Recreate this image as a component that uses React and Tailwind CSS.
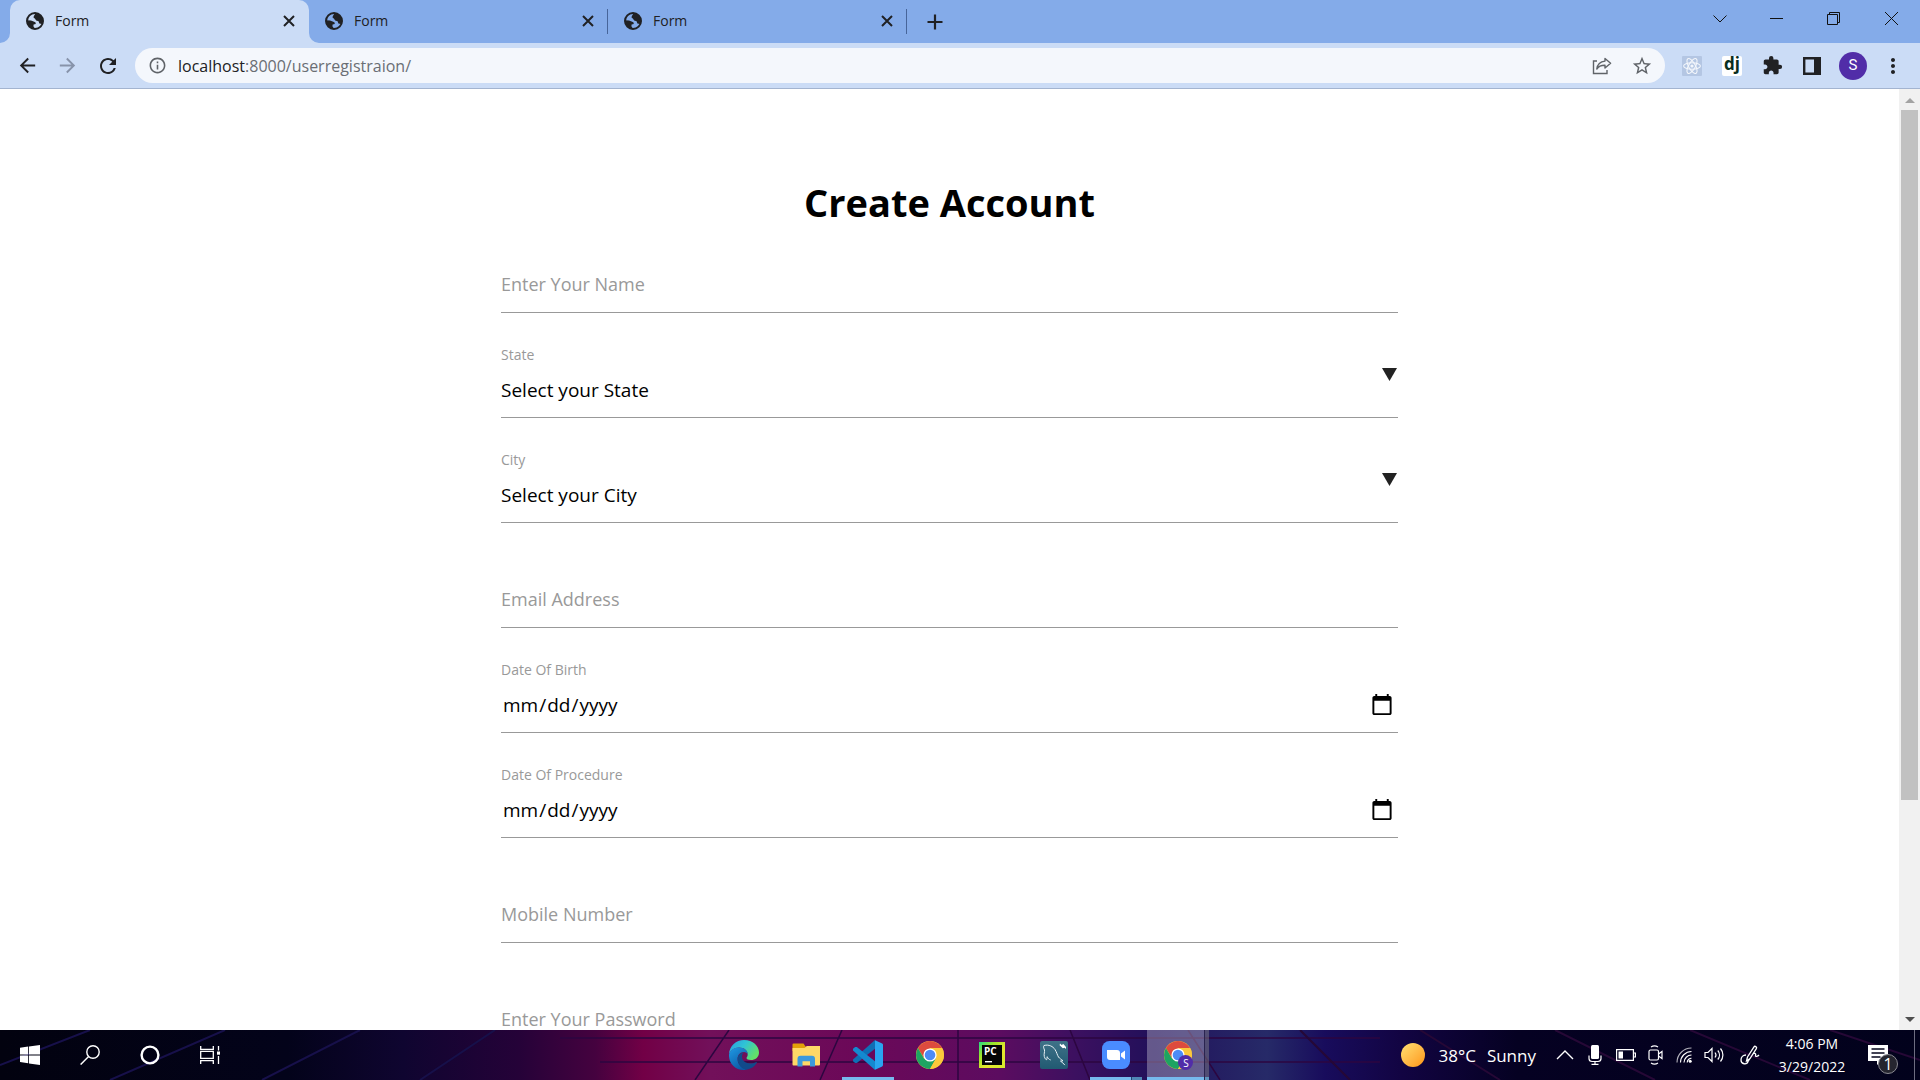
import React from "react";
import {
  MdArrowBack,
  MdArrowForward,
  MdRefresh,
  MdInfoOutline,
  MdStarBorder,
  MdExtension,
  MdMoreVert,
} from "react-icons/md";

/* ---------- browser icons ---------- */

function Globe() {
  return (
    <svg viewBox="0 0 18 18" className="size-[18px] shrink-0" fill="none">
      <circle cx="9" cy="9" r="8" stroke="#202124" strokeWidth="2" />
      <path
        d="M9.5 1.2 8.2 3.4 7.4 5.2 9 6.8 10.2 8.6 12.6 9.2 13.4 11.6 16 12 17 9 15.6 4.4 12 1.6z"
        fill="#202124"
      />
      <path
        d="M1 8.2 5 8.4 7.6 9.4 9.4 10.2 9.8 12 7.6 12.6 7.4 14.2 9 16.8 5 16 2 13z"
        fill="#202124"
      />
    </svg>
  );
}

function CloseIcon() {
  return (
    <svg viewBox="0 0 12 12" className="size-3" stroke="currentColor" strokeWidth="2">
      <path d="m1 1 10 10M11 1 1 11" />
    </svg>
  );
}

function PlusIcon() {
  return (
    <svg viewBox="0 0 16 16" className="size-4" stroke="currentColor" strokeWidth="2.2">
      <path d="M8 .5v15M.5 8h15" />
    </svg>
  );
}

function ShareIcon() {
  return (
    <svg viewBox="0 0 20 20" className="size-5" fill="none" stroke="#5f6368" strokeWidth="1.4">
      <path d="M5 5H1.5v12.5H15V14" />
      <path d="M13 2.5 18.6 7.3 13 12V9.3C9 9.2 6.4 10.6 4.8 13 5.3 9 8 5.6 13 5.1z" strokeLinejoin="round" />
    </svg>
  );
}

function ReactExt() {
  return (
    <svg viewBox="0 0 20 20" className="size-5" fill="none">
      <rect width="20" height="20" rx="1" fill="#b4c6e3" />
      <g stroke="#f4f7fc" strokeWidth="1.1">
        <ellipse cx="10" cy="10" rx="8.4" ry="3.3" />
        <ellipse cx="10" cy="10" rx="8.4" ry="3.3" transform="rotate(60 10 10)" />
        <ellipse cx="10" cy="10" rx="8.4" ry="3.3" transform="rotate(120 10 10)" />
      </g>
      <circle cx="10" cy="10" r="1.6" fill="#f4f7fc" />
    </svg>
  );
}

function SidePanel() {
  return (
    <svg viewBox="0 0 18 18" className="size-[18px]">
      <path fill="#202124" fillRule="evenodd" d="M0 0h18v18H0zM2.4 2.4v13.2H11V2.4z" />
    </svg>
  );
}

/* ---------- taskbar icons ---------- */

function WindowsIcon() {
  return (
    <svg viewBox="0 0 20 20" className="size-5" fill="#fff">
      <path d="M0 2.8 8.2 1.6V9.5H0zM9 1.5 20 0v9.5H9zM0 10.4h8.2v7.9L0 17.1zM9 10.4h11V20L9 18.4z" />
    </svg>
  );
}

function SearchIcon() {
  return (
    <svg viewBox="0 0 20 20" className="size-5" fill="none" stroke="#fff" strokeWidth="1.4">
      <circle cx="13" cy="7" r="6.2" />
      <path d="M8.6 11.6.6 19.6" />
    </svg>
  );
}

function CortanaIcon() {
  return (
    <svg viewBox="0 0 20 20" className="size-5" fill="none" stroke="#fff" strokeWidth="2.4">
      <circle cx="10" cy="10" r="8.4" />
    </svg>
  );
}

function TaskViewIcon() {
  return (
    <svg viewBox="0 0 20 20" className="size-5" fill="none" stroke="#fff" strokeWidth="1.3">
      <path d="M.7 1v3.3h12.6V1M.7 19v-3.3h12.6V19M.7 6.4h12.6v7H.7zM18.5 1v4.5M18.5 11v8" />
      <path d="M17 6.5h3v3.2h-3z" fill="#fff" stroke="none" />
    </svg>
  );
}

function EdgeIcon() {
  return (
    <svg viewBox="0 0 30 30" className="size-[30px]">
      <defs>
        <linearGradient id="edgeTop" x1="0" y1="0" x2="1" y2="0.5">
          <stop offset="0" stopColor="#2b9be0" />
          <stop offset=".5" stopColor="#2fc3d6" />
          <stop offset="1" stopColor="#62e069" />
        </linearGradient>
        <linearGradient id="edgeLow" x1="0" y1="0" x2="0.6" y2="1">
          <stop offset="0" stopColor="#1f9ae4" />
          <stop offset="1" stopColor="#0c59a4" />
        </linearGradient>
      </defs>
      <path
        d="M0 14.5C.5 5.500 7 0 15 0c9 0 15 6 15 12.500 0 5-4 7.500-8 7.500-3 0-4.500-1-4.500-2 0-.8 1.200-1.300 1.200-3.600C18.700 10.500 15 7.600 10 7.600 5 7.600 1.500 10.500 0 14.500z"
        fill="url(#edgeTop)"
      />
      <path
        d="M0 14.500C1.500 10 5 7.600 10 7.600c5 0 8.700 2.900 8.700 6.800-.5-1.400-2-2.300-3.700-2.300-4 0-6.400 3.200-6.400 7 0 5.400 4.400 8.900 8.800 10.600C7.500 31.500-.5 24 0 14.500z"
        fill="url(#edgeLow)"
      />
      <path
        d="M15 12.100c-5 1.700-6.400 4-6.400 7.200 0 5 4 9.900 8.800 10.400 4.600-.5 8.200-3.200 10.300-6.600.5-.9-.3-1.200-.9-.9-5.500 2.800-13.800.6-13.800-5.500 0-2 .8-3.700 2-4.600z"
        fill="#114a8b"
      />
    </svg>
  );
}

function FolderIcon() {
  return (
    <svg viewBox="0 0 28 24" className="h-6 w-7">
      <path d="M.5 1.500a1 1 0 0 1 1-1h10l2 3H28V8H.500z" fill="#e3a008" />
      <path d="M.5 5h12l2.500-2h13v18.500a1 1 0 0 1-1 1H1.500a1 1 0 0 1-1-1z" fill="#ffd867" />
      <path d="M5.500 23.500v-7.700a3 3 0 0 1 3-3h11.500a3 3 0 0 1 3 3v7.700h-5v-5.200h-7.500v5.200z" fill="#3b99dc" />
    </svg>
  );
}

function VsCodeIcon() {
  return (
    <svg viewBox="0 0 30 30" className="size-[30px]">
      <path d="M22 0 0 19.500v1.700L2.200 23l1.600-.1L22.300 8.500z" fill="#0f6fb5" />
      <path d="M22 30 0 10.500V8.800L2.200 7l1.600.1L22.300 21.500z" fill="#1489d0" />
      <path d="M22 .3 29.200 3.600c.5.300.8.800.8 1.400v20c0 .6-.3 1.100-.8 1.400L22 29.700z" fill="#2aa5f0" />
    </svg>
  );
}

function ChromeIcon() {
  return (
    <svg viewBox="0 0 28 28" className="size-7">
      <circle cx="14" cy="14" r="14" fill="#fbc93b" />
      <path d="M14 7h12.100A14 14 0 0 0 1.900 7L8 17z" fill="#dd4b3e" />
      <path d="M1.900 7A14 14 0 0 0 14 28l6-10.500-6-3.500-6 3.500z" fill="#1da462" />
      <path d="M14 7h12.100A14 14 0 0 1 14 28l6-10.500z" fill="#fbc93b" />
      <circle cx="14" cy="14" r="6.600" fill="#fff" />
      <circle cx="14" cy="14" r="5.300" fill="#4c8bf5" />
    </svg>
  );
}

function PyCharmIcon() {
  return (
    <svg viewBox="0 0 26 26" className="size-[26px]">
      <defs>
        <linearGradient id="pyc" x1="0" y1="0" x2="1" y2="1">
          <stop offset="0" stopColor="#21d789" />
          <stop offset=".3" stopColor="#9be52a" />
          <stop offset=".6" stopColor="#e6e62e" />
          <stop offset="1" stopColor="#d3ea2b" />
        </linearGradient>
      </defs>
      <path d="M0 0h26v26H0z" fill="url(#pyc)" />
      <path d="M3 3h20v20H3z" fill="#050505" />
      <path d="M6 19h7v1.400H6z" fill="#fff" />
      <text x="5" y="13" fontFamily="Open Sans, sans-serif" fontWeight="700" fontSize="10" fill="#fff">
        PC
      </text>
    </svg>
  );
}

function WorkbenchIcon() {
  return (
    <svg viewBox="0 0 28 28" className="size-7" fill="none">
      <defs>
        <linearGradient id="wb" x1="0" y1="0" x2="0" y2="1">
          <stop offset="0" stopColor="#3f7288" />
          <stop offset="1" stopColor="#215a72" />
        </linearGradient>
      </defs>
      <rect width="28" height="28" rx="2" fill="url(#wb)" />
      <path
        d="M4 4.500c-1 1.500 0 3 .5 4.500.3 2-.8 4-.2 6.500.6 2 1.600 3.500 2.300 3.200.7-.3.200-2 .6-3 .6 1.500 1.800 2.800 3.500 3.300M4 4.500c5-1.300 9 1 11 4 1.800 2.800 2.200 5.500 3.500 7.500 1 1.500 3 2.400 4.500 3.800l-2.500.3c1.500 1.200 3.200 2.200 4.300 4"
        stroke="#e8f1f5"
        strokeWidth="1"
      />
      <path d="m20 2.500 1.600 1.600 1.800-1.200 2.600 3.200v2l-1.400-1.300-1.800.5-3.200-3z" fill="#fff" />
    </svg>
  );
}

function ZoomIcon() {
  return (
    <svg viewBox="0 0 28 28" className="size-7">
      <rect width="28" height="28" rx="7.500" fill="#4a8cff" />
      <path d="M5 9h10a3 3 0 0 1 3 3v7H8a3 3 0 0 1-3-3zM19 12.500 23 9.500v9l-4-3z" fill="#fff" />
    </svg>
  );
}

/* ---------- tray icons ---------- */

function TrayChevron() {
  return (
    <svg viewBox="0 0 18 10" className="h-[10px] w-[18px]" fill="none" stroke="#fff" strokeWidth="1.400">
      <path d="m1 9 8-8 8 8" />
    </svg>
  );
}

function MicIcon() {
  return (
    <svg viewBox="0 0 14 20" className="h-5 w-[14px]" fill="none" stroke="#fff" strokeWidth="1.200">
      <rect x="3" y="0" width="8" height="14" rx="1.500" fill="#fff" stroke="none" />
      <path d="M1 10.500v3a3 3 0 0 0 3 3h6a3 3 0 0 0 3-3v-3M7 16.500v3M3.500 19.400h7" />
    </svg>
  );
}

function BatteryIcon() {
  return (
    <svg viewBox="0 0 20 12" className="h-3 w-5" fill="none" stroke="#fff" strokeWidth="1.200">
      <path d="M.6.6h16.800v10.800H.6zM17.500 4h1.900v4h-1.900" />
      <path d="M2.500 2.500h4.500v7H2.500z" fill="#fff" stroke="none" />
    </svg>
  );
}

function MeetIcon() {
  return (
    <svg viewBox="0 0 16 20" className="h-5 w-4" fill="none" stroke="#fff" strokeWidth="1.200">
      <rect x="1" y="5" width="9.500" height="10" rx="1.500" />
      <path d="m10.500 9 3.500-2.500v7L10.500 11M3 2c2-1.300 5-1.300 7 0M3 18c2 1.300 5 1.300 7 0" />
    </svg>
  );
}

function WifiIcon() {
  return (
    <svg viewBox="0 0 16 16" className="size-4" fill="none" stroke="#fff" strokeWidth="1.100">
      <path d="M1 15.500C1 7.500 7.500 1 15.500 1" opacity=".7" />
      <path d="M4.500 15.500c0-6 5-11 11-11M8 15.500c0-4 3.500-7.500 7.500-7.500M11.200 15.500c0-2.300 2-4.300 4.300-4.300" />
      <circle cx="14.200" cy="14.200" r="1.500" fill="#fff" stroke="none" />
    </svg>
  );
}

function VolumeIcon() {
  return (
    <svg viewBox="0 0 20 16" className="h-4 w-5" fill="none" stroke="#fff" strokeWidth="1.200">
      <path d="M1 5.500h3L8 1.500v13l-4-4H1zM11 5.500c1.200 1.500 1.200 3.500 0 5M13.800 3.500c2.200 2.600 2.200 6.400 0 9M16.500 1.500c3.200 3.800 3.200 9.200 0 13" />
    </svg>
  );
}

function PenIcon() {
  return (
    <svg viewBox="0 0 20 20" className="size-5" fill="none" stroke="#fff" strokeWidth="1.300">
      <path d="M6.500 16 7.500 12 14 1.800c.8-1.200 3.200.2 2.500 1.500L10 13.500zM6 10c-3 0-5 2-5 5 0 4.500 6 5 7 1.500l5-7.500c1-1.500 3.500-.5 2.500 1.500-.5 1.500 2.500.8 3.500-.5" />
    </svg>
  );
}

function NotificationIcon() {
  return (
    <svg viewBox="0 0 20 20" className="size-5">
      <path d="M0 0h20v16h-6.500L9 20v-4H0z" fill="#fff" />
      <path d="M3.500 4h13M3.500 8h13M3.500 12h9" stroke="#05051c" strokeWidth="1.300" />
    </svg>
  );
}

/* ---------- browser window ---------- */

function Tab({ active, separator }) {
  return (
    <div
      className={
        active
          ? "relative flex w-[299px] min-w-0 items-center rounded-t-[10px] bg-[#cbdcf6] pr-[14px] pb-[2px] pl-4"
          : "relative flex w-[299px] min-w-0 items-center pr-[14px] pb-[2px] pl-4"
      }
    >
      <Globe />
      <span className="ml-[11px] flex-1 truncate text-sm text-[#202124]">Form</span>
      <button type="button" aria-label="Close tab" className="text-[#202124]">
        <CloseIcon />
      </button>
      {separator && <span className="absolute top-[9px] right-0 h-[25px] w-px bg-[#47659a]" />}
      {active && (
        <>
          <svg viewBox="0 0 10 10" className="absolute bottom-0 -left-[10px] size-[10px]">
            <path d="M10 0v10H0A10 10 0 0 0 10 0z" fill="#cbdcf6" />
          </svg>
          <svg viewBox="0 0 10 10" className="absolute -right-[10px] bottom-0 size-[10px]">
            <path d="M0 0v10h10A10 10 0 0 1 0 0z" fill="#cbdcf6" />
          </svg>
        </>
      )}
    </div>
  );
}

function TabStrip() {
  return (
    <div className="flex h-[43px] bg-[#84abe9] pl-[10px]">
      <Tab active />
      <Tab separator />
      <Tab separator />
      <button type="button" aria-label="New tab" className="ml-5 flex items-center text-[#202124]">
        <PlusIcon />
      </button>
      <div className="ml-auto flex h-[37px] items-center text-[#111]">
        <button type="button" aria-label="Search tabs" className="flex w-[57px] justify-center">
          <svg viewBox="0 0 14 8" className="h-2 w-[14px]" fill="none" stroke="currentColor">
            <path d="m.5.5 6.500 6.500 6.500-6.500" />
          </svg>
        </button>
        <button type="button" aria-label="Minimize" className="flex w-[57px] justify-center">
          <svg viewBox="0 0 13 13" className="size-[13px]" stroke="currentColor">
            <path d="M0 6.500h13" />
          </svg>
        </button>
        <button type="button" aria-label="Restore" className="flex w-[57px] justify-center">
          <svg viewBox="0 0 13 13" className="size-[13px]" fill="none" stroke="currentColor">
            <path d="M.5 2.500h10v10H.5zM2.500 2.500v-2h10v10h-2" />
          </svg>
        </button>
        <button type="button" aria-label="Close window" className="flex w-[58px] justify-center">
          <svg viewBox="0 0 13 13" className="size-[13px]" stroke="currentColor">
            <path d="m0 0 13 13M13 0 0 13" />
          </svg>
        </button>
      </div>
    </div>
  );
}

function ExtensionButton({ label, children }) {
  return (
    <button type="button" aria-label={label} className="flex w-10 justify-center">
      {children}
    </button>
  );
}

function Toolbar() {
  return (
    <div className="flex h-[46px] items-center border-b border-[#a3b4d0] bg-[#cbdcf6] text-[#202124]">
      <div className="flex w-[135px] items-center gap-[17px] pl-4">
        <button type="button" aria-label="Back">
          <MdArrowBack size={23} />
        </button>
        <button type="button" aria-label="Forward" className="text-[#8793aa]">
          <MdArrowForward size={23} />
        </button>
        <button type="button" aria-label="Reload">
          <MdRefresh size={24} />
        </button>
      </div>
      <div className="flex h-[35px] flex-1 items-center rounded-full bg-[#f4f7fc] pr-3 pl-[13px]">
        <MdInfoOutline size={19} className="text-[#5f6368]" />
        <div className="ml-[11px] flex-1 text-base">
          localhost<span className="text-[#6a6e74]">:8000/userregistraion/</span>
        </div>
        <button type="button" aria-label="Share" className="mr-[19px]">
          <ShareIcon />
        </button>
        <button type="button" aria-label="Bookmark this page" className="text-[#5f6368]">
          <MdStarBorder size={22} />
        </button>
      </div>
      <div className="flex items-center pl-[7px]">
        <ExtensionButton label="React Developer Tools">
          <ReactExt />
        </ExtensionButton>
        <ExtensionButton label="Django extension">
          <span className="flex size-5 items-center justify-center rounded-xs bg-white pb-1 text-[17px] leading-4 font-bold text-[#092e20]">
            dj
          </span>
        </ExtensionButton>
        <ExtensionButton label="Extensions">
          <MdExtension size={21} />
        </ExtensionButton>
        <ExtensionButton label="Side panel">
          <SidePanel />
        </ExtensionButton>
        <button
          type="button"
          aria-label="Profile"
          className="ml-[7px] flex size-7 items-center justify-center rounded-full bg-[#512da8] font-[Roboto] text-[15px] text-white"
        >
          S
        </button>
        <button type="button" aria-label="Menu" className="flex w-[53px] justify-center pr-[2px]">
          <MdMoreVert size={24} />
        </button>
      </div>
    </div>
  );
}

/* ---------- registration form ---------- */

function TextField({ id, label, type = "text" }) {
  return (
    <div className="h-[105px] shrink-0 border-b border-[#999] pt-[50px]">
      <input
        id={id}
        type={type}
        aria-label={label}
        placeholder={label}
        className="h-[52px] w-full bg-transparent text-lg outline-none placeholder:text-[#999]"
      />
    </div>
  );
}

function SelectField({ id, label, option }) {
  return (
    <div className="relative h-[105px] shrink-0 border-b border-[#999] pt-8">
      <label htmlFor={id} className="block text-sm text-[#999]">
        {label}
      </label>
      <select id={id} className="h-[50px] w-full appearance-none bg-transparent text-[19px] text-black outline-none">
        <option>{option}</option>
      </select>
      <svg viewBox="0 0 15 13" className="pointer-events-none absolute top-[55px] right-px h-[13px] w-[15px]">
        <path d="M0 0h15L7.500 13z" fill="#222" />
      </svg>
    </div>
  );
}

function DateField({ id, label }) {
  return (
    <div className="h-[105px] shrink-0 border-b border-[#999] pt-8">
      <label htmlFor={id} className="block text-sm text-[#999]">
        {label}
      </label>
      <input
        id={id}
        type="date"
        className="h-[50px] w-full bg-transparent pr-1 pl-px text-[19px] text-black outline-none [&::-webkit-calendar-picker-indicator]:size-6 [&::-webkit-calendar-picker-indicator]:p-0"
      />
    </div>
  );
}

function Scrollbar() {
  return (
    <div className="flex w-[21px] flex-col items-center bg-[#f1f1f1] py-2">
      <svg viewBox="0 0 10 5" className="mt-px h-[5px] w-[10px]">
        <path d="M0 5 5 0l5 5z" fill="#a3a3a3" />
      </svg>
      <div className="mt-[7px] h-[calc(75%-4px)] w-[17px] bg-[#c1c1c1]" />
      <svg viewBox="0 0 10 5" className="mt-auto h-[5px] w-[10px]">
        <path d="M0 0h10L5 5z" fill="#505050" />
      </svg>
    </div>
  );
}

function Page() {
  return (
    <main className="flex min-h-0 flex-1 bg-white">
      <div className="flex min-w-0 flex-1 justify-center overflow-hidden">
        <form className="flex w-[897px] flex-col pt-[89px]">
          <h1 className="h-[30px] text-center text-[38px] leading-[48px] font-bold text-black">Create Account</h1>
          <TextField id="name" label="Enter Your Name" />
          <SelectField id="state" label="State" option="Select your State" />
          <SelectField id="city" label="City" option="Select your City" />
          <TextField id="email" label="Email Address" type="email" />
          <DateField id="birth" label="Date Of Birth" />
          <DateField id="procedure" label="Date Of Procedure" />
          <TextField id="mobile" label="Mobile Number" type="tel" />
          <TextField id="password" label="Enter Your Password" type="password" />
        </form>
      </div>
      <Scrollbar />
    </main>
  );
}

/* ---------- taskbar ---------- */

function Wallpaper() {
  return (
    <svg
      viewBox="0 0 1920 50"
      preserveAspectRatio="none"
      className="absolute inset-0 h-full w-full"
      fill="none"
      aria-hidden="true"
    >
      <defs>
        <linearGradient id="wall">
          <stop offset="0" stopColor="#02020f" />
          <stop offset=".15" stopColor="#03031a" />
          <stop offset=".21" stopColor="#0f0530" />
          <stop offset=".27" stopColor="#250238" />
          <stop offset=".31" stopColor="#45023f" />
          <stop offset=".335" stopColor="#720046" />
          <stop offset=".37" stopColor="#72105a" />
          <stop offset=".45" stopColor="#6b0858" />
          <stop offset=".52" stopColor="#5c0c60" />
          <stop offset=".56" stopColor="#3c1060" />
          <stop offset=".6" stopColor="#22105a" />
          <stop offset=".66" stopColor="#262a68" />
          <stop offset=".69" stopColor="#180c5c" />
          <stop offset=".73" stopColor="#120442" />
          <stop offset=".79" stopColor="#050122" />
          <stop offset="1" stopColor="#02021c" />
        </linearGradient>
      </defs>
      <path d="M0 0h1920v50H0z" fill="url(#wall)" />
      <path d="M0 35 90 0M110 50 225 0M262 50 360 0M420 50 495 0" stroke="#17104a" strokeWidth="2" />
      <path
        d="M560 8h820M600 32h780M695 50l34-50M820 50l22-50M958 50V0M1090 50 1070 0M1220 50l-32-50"
        stroke="#2c0640"
        strokeWidth="1.500"
      />
      <path d="M1350 50 1300 0M1500 50 1420 0M1655 50 1555 0M1810 50 1690 0M1920 30 1830 0" stroke="#260836" strokeWidth="2" />
    </svg>
  );
}

function AppButton({ label, running, stacked, active, children }) {
  return (
    <button
      type="button"
      aria-label={label}
      className={
        active
          ? "relative flex w-[62px] items-center justify-center bg-white/30"
          : "relative flex w-[62px] items-center justify-center"
      }
    >
      {children}
      {running && (
        <span
          className={
            active
              ? "absolute inset-x-0 bottom-0 flex h-[3px] bg-[#76b9ed]"
              : "absolute inset-x-[5px] bottom-0 flex h-[3px] bg-[#76b9ed]"
          }
        >
          {stacked && <span className="ml-auto w-[11px] border-l border-[#24426f] bg-[#4f86b5]" />}
        </span>
      )}
      {active && <span className="absolute inset-y-0 right-0 w-[5px] border-l border-[#2a2450] bg-black/20" />}
    </button>
  );
}

function SystemButton({ label, children }) {
  return (
    <button type="button" aria-label={label} className="flex w-[60px] items-center justify-center">
      {children}
    </button>
  );
}

function Taskbar() {
  return (
    <footer className="relative h-[50px] shrink-0 text-white">
      <Wallpaper />
      <div className="relative flex h-full">
        <SystemButton label="Start">
          <WindowsIcon />
        </SystemButton>
        <SystemButton label="Search">
          <SearchIcon />
        </SystemButton>
        <SystemButton label="Cortana">
          <CortanaIcon />
        </SystemButton>
        <SystemButton label="Task view">
          <TaskViewIcon />
        </SystemButton>
        <nav aria-label="Pinned apps" className="mr-[192px] ml-auto flex">
          <AppButton label="Microsoft Edge">
            <EdgeIcon />
          </AppButton>
          <AppButton label="File Explorer">
            <FolderIcon />
          </AppButton>
          <AppButton label="Visual Studio Code" running>
            <VsCodeIcon />
          </AppButton>
          <AppButton label="Google Chrome">
            <ChromeIcon />
          </AppButton>
          <AppButton label="PyCharm">
            <PyCharmIcon />
          </AppButton>
          <AppButton label="MySQL Workbench">
            <WorkbenchIcon />
          </AppButton>
          <AppButton label="Zoom" running stacked>
            <ZoomIcon />
          </AppButton>
          <AppButton label="Google Chrome, profile S" running active>
            <span className="relative">
              <ChromeIcon />
              <span className="absolute -right-px -bottom-px flex size-[15px] items-center justify-center rounded-full bg-[#512da8] text-[10px] leading-none">
                S
              </span>
            </span>
          </AppButton>
        </nav>
        <div className="flex items-center">
          <button type="button" className="flex items-center text-[17px] whitespace-nowrap">
            <span className="mr-[13px] size-6 rounded-full bg-linear-to-br from-[#ffe070] to-[#ff9500]" />
            <span className="mr-[11px] pt-[2px]">38°C</span>
            <span className="pt-[2px]">Sunny</span>
          </button>
          <div className="ml-5 flex items-center gap-3">
            <TrayChevron />
            <span className="mr-[2px] ml-[2px]">
              <MicIcon />
            </span>
            <BatteryIcon />
            <MeetIcon />
            <WifiIcon />
            <VolumeIcon />
            <span className="ml-1">
              <PenIcon />
            </span>
          </div>
          <div className="ml-[18px] w-[68px] text-center text-sm leading-[23px] whitespace-nowrap">
            <div>4:06 PM</div>
            <div>3/29/2022</div>
          </div>
          <button type="button" aria-label="Notifications" className="relative mr-[26px] ml-[22px]">
            <NotificationIcon />
            <span className="absolute top-[9px] left-[10px] flex size-5 items-center justify-center rounded-full border border-[#8a8a92] bg-[#25252f] text-base leading-none">
              1
            </span>
          </button>
          <span className="mr-[5px] h-full w-px bg-[#6d6d80]" />
        </div>
      </div>
    </footer>
  );
}

export default function App() {
  return (
    <div className="flex h-screen flex-col overflow-hidden font-['Open_Sans','Noto_Sans',sans-serif]">
      <header>
        <TabStrip />
        <Toolbar />
      </header>
      <Page />
      <Taskbar />
    </div>
  );
}
